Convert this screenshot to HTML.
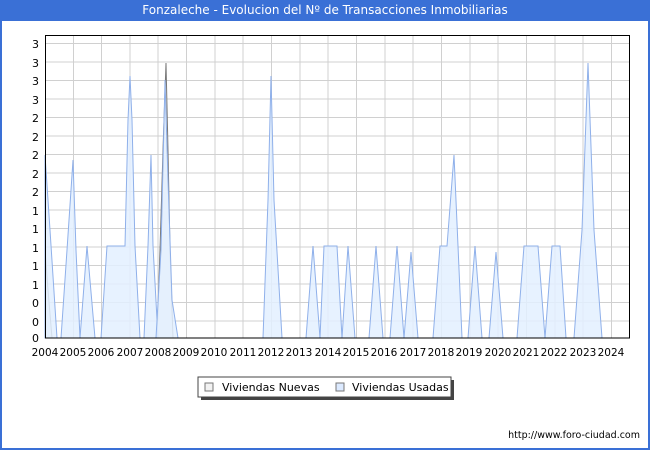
<!DOCTYPE html>
<html><head><style>
body{margin:0;width:650px;height:450px;background:#fff;font-family:"DejaVu Sans","Liberation Sans",sans-serif;overflow:hidden;position:relative}
.frame{position:absolute;left:0;top:0;width:646px;height:448px;border:2px solid #3a70d6;border-top:none}
.title{position:absolute;left:0;top:0;width:650px;height:21px;background:#3a70d6;color:#fff;font-size:12px;text-align:center;line-height:21px}
svg text{font-family:"DejaVu Sans","Liberation Sans",sans-serif}
</style></head><body>
<div class="frame"></div>
<div class="title">Fonzaleche - Evolucion del Nº de Transacciones Inmobiliarias</div>
<svg width="650" height="450" style="position:absolute;left:0;top:0">
<g stroke="#d0d0d0" stroke-width="1">
<line x1="45" x2="630" y1="43.5" y2="43.5"/><line x1="45" x2="630" y1="62" y2="62"/><line x1="45" x2="630" y1="80.5" y2="80.5"/><line x1="45" x2="630" y1="99" y2="99"/><line x1="45" x2="630" y1="117.5" y2="117.5"/><line x1="45" x2="630" y1="136" y2="136"/><line x1="45" x2="630" y1="154.5" y2="154.5"/><line x1="45" x2="630" y1="173" y2="173"/><line x1="45" x2="630" y1="191.5" y2="191.5"/><line x1="45" x2="630" y1="210" y2="210"/><line x1="45" x2="630" y1="228.5" y2="228.5"/><line x1="45" x2="630" y1="247" y2="247"/><line x1="45" x2="630" y1="265.5" y2="265.5"/><line x1="45" x2="630" y1="284" y2="284"/><line x1="45" x2="630" y1="302.5" y2="302.5"/><line x1="45" x2="630" y1="321" y2="321"/>
<line y1="35" y2="338" x1="73.5" x2="73.5"/><line y1="35" y2="338" x1="101.5" x2="101.5"/><line y1="35" y2="338" x1="130" x2="130"/><line y1="35" y2="338" x1="158" x2="158"/><line y1="35" y2="338" x1="186.5" x2="186.5"/><line y1="35" y2="338" x1="215" x2="215"/><line y1="35" y2="338" x1="243" x2="243"/><line y1="35" y2="338" x1="271.5" x2="271.5"/><line y1="35" y2="338" x1="300" x2="300"/><line y1="35" y2="338" x1="328" x2="328"/><line y1="35" y2="338" x1="356.5" x2="356.5"/><line y1="35" y2="338" x1="385" x2="385"/><line y1="35" y2="338" x1="413" x2="413"/><line y1="35" y2="338" x1="441.5" x2="441.5"/><line y1="35" y2="338" x1="470" x2="470"/><line y1="35" y2="338" x1="498" x2="498"/><line y1="35" y2="338" x1="526.5" x2="526.5"/><line y1="35" y2="338" x1="555" x2="555"/><line y1="35" y2="338" x1="583" x2="583"/><line y1="35" y2="338" x1="611.5" x2="611.5"/>
</g>
<g fill="#f2f2f2" stroke="#777" stroke-width="1">
<polygon points="45,250 48,290 52,338 45,338"/>
<polygon points="157,338 160,250 163,150 166,63 168,150 170,250 173,338"/>
</g>
<g fill="#e3f0ff" fill-opacity="0.85" stroke="#8fb0ea" stroke-width="1">
<polygon points="45,155 50,230 57,338 45,338"/>
<polygon points="61,338 67,250 73,160 76,250 80,338"/>
<polygon points="80,338 87,246 95,338"/>
<polygon points="101,338 107,246 125,246 128,120 130,76 132,120 135,246 140,338"/>
<polygon points="144,338 148,246 151,155 153,246 158,338"/>
<polygon points="156,338 161,250 165,80 168,180 172,300 178,338"/>
<polygon points="263,338 268,200 271,76 274,200 282,338"/>
<polygon points="306,338 313,246 320,338"/>
<polygon points="320,338 324,246 337,246 342,338"/>
<polygon points="342,338 348,246 355,338"/>
<polygon points="369,338 376,246 383,338"/>
<polygon points="390,338 397,246 404,338"/>
<polygon points="404,338 411,252 418,338"/>
<polygon points="433,338 440,246 447,246 454,155 458,246 462,338"/>
<polygon points="468,338 475,246 482,338"/>
<polygon points="489,338 496,252 503,338"/>
<polygon points="517,338 524,246 538,246 545,338"/>
<polygon points="545,338 552,246 560,246 566,338"/>
<polygon points="574,338 582,230 588,63 594,230 602,338"/>
</g>
<rect x="45.5" y="35.5" width="584" height="302.5" fill="none" stroke="#000" stroke-width="1"/>
<g font-size="11" fill="#000" text-anchor="end">
<text x="39" y="48">3</text><text x="39" y="67">3</text><text x="39" y="85">3</text><text x="39" y="104">3</text><text x="39" y="122">2</text><text x="39" y="141">2</text><text x="39" y="159">2</text><text x="39" y="178">2</text><text x="39" y="196">2</text><text x="39" y="215">1</text><text x="39" y="233">1</text><text x="39" y="252">1</text><text x="39" y="270">1</text><text x="39" y="289">1</text><text x="39" y="307">0</text><text x="39" y="326">0</text><text x="39" y="342">0</text>
</g>
<g font-size="10.5" fill="#000" text-anchor="middle">
<text x="45" y="356">2004</text><text x="73" y="356">2005</text><text x="101" y="356">2006</text><text x="130" y="356">2007</text><text x="158" y="356">2008</text><text x="186" y="356">2009</text><text x="214" y="356">2010</text><text x="243" y="356">2011</text><text x="271" y="356">2012</text><text x="299" y="356">2013</text><text x="328" y="356">2014</text><text x="356" y="356">2015</text><text x="384" y="356">2016</text><text x="413" y="356">2017</text><text x="441" y="356">2018</text><text x="469" y="356">2019</text><text x="498" y="356">2020</text><text x="526" y="356">2021</text><text x="554" y="356">2022</text><text x="583" y="356">2023</text><text x="611" y="356">2024</text>
</g>
<rect x="201" y="380" width="253" height="20" fill="#444"/>
<rect x="198" y="377" width="253" height="20" fill="#fff" stroke="#444" stroke-width="1"/>
<rect x="205" y="383" width="8" height="8" fill="#f2f2f2" stroke="#777"/>
<text x="222" y="391" font-size="11">Viviendas Nuevas</text>
<rect x="336" y="383" width="8" height="8" fill="#dceaff" stroke="#777"/>
<text x="352" y="391" font-size="11">Viviendas Usadas</text>
<text x="640" y="438" font-size="9.5" text-anchor="end">http://www.foro-ciudad.com</text>
</svg>
</body></html>
